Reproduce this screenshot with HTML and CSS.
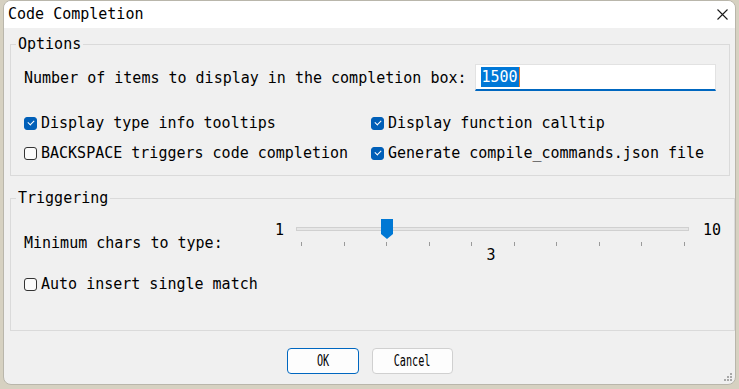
FILE: index.html
```html
<!DOCTYPE html>
<html lang="en">
  <head>
    <meta charset="UTF-8" />
    <title>Code Completion</title>
    <link rel="stylesheet" href="styles.css">
  </head>
  <body>
    <div class="window">
      <div class="titlebar">
        <span class="title">Code Completion</span>
        <svg class="close" width="11" height="11" viewBox="0 0 11 11">
          <path d="M0.5 0.5 L10.5 10.5 M10.5 0.5 L0.5 10.5" stroke="#1a1a1a" stroke-width="1.1" />
        </svg>
      </div>
      <div class="content">
        <fieldset class="group options">
          <legend>Options</legend>
          <div class="items-row">
            <span class="items-label">Number of items to display in the completion box:</span>
            <div class="textbox"><span class="sel">1500</span><span class="caret"></span></div>
          </div>
          <div class="check-grid">
            <div class="check"><span class="box checked"></span>Display type info tooltips</div>
            <div class="check"><span class="box checked"></span>Display function calltip</div>
            <div class="check"><span class="box"></span>BACKSPACE triggers code completion</div>
            <div class="check"><span class="box checked"></span>Generate compile_commands.json file</div>
          </div>
        </fieldset>

        <fieldset class="group triggering">
          <legend>Triggering</legend>
          <div class="slider-row">
            <span class="slider-label">Minimum chars to type:</span>
            <div class="slider">
              <div class="slider-top">
                <span class="end">1</span>
                <div class="track-wrap">
                  <div class="track"></div>
                  <svg class="handle" width="12" height="20" viewBox="0 0 12 20">
                    <path d="M0 0 H12 V15 L6 20 L0 15 Z" fill="#0078d4" />
                  </svg>
                  <div class="ticks">
                    <i></i><i></i><i></i><i></i><i></i><i></i><i></i><i></i><i></i><i></i>
                  </div>
                  <div class="value">3</div>
                </div>
                <span class="end">10</span>
              </div>
            </div>
          </div>
          <div class="check single"><span class="box"></span>Auto insert single match</div>
        </fieldset>

        <div class="buttons">
          <button class="btn default"><span>OK</span></button>
          <button class="btn"><span>Cancel</span></button>
        </div>
      </div>
      <div class="grip">
        <i style="grid-area: 1 / 3"></i>
        <i style="grid-area: 2 / 2"></i><i style="grid-area: 2 / 3"></i>
        <i style="grid-area: 3 / 1"></i><i style="grid-area: 3 / 2"></i><i style="grid-area: 3 / 3"></i>
      </div>
    </div>
  </body>
</html>
```

FILE: styles.css
```css
* {
  margin: 0;
  padding: 0;
  box-sizing: border-box;
}
body {
  background-color: #d6d1c1;
  font-family: "DejaVu Sans Mono", "Liberation Mono", monospace;
  font-size: 15px;
  color: #000;
}
.window {
  position: relative;
  width: 733px;
  height: 385px;
  margin-left: 3px;
  background-color: #f0f0f0;
  border: 1px solid #b9b6ab;
  border-radius: 8px;
  overflow: hidden;
}
.titlebar {
  display: flex;
  align-items: center;
  justify-content: space-between;
  height: 27px;
  padding: 0 7px 0 4px;
  background-color: #fff;
}
.title {
  line-height: 27px;
}
.content {
  padding: 7px 5px 0 6px;
}
.group {
  border: 1px solid #dadada;
  padding: 0 13px 0 13px;
}
.group legend {
  margin-left: -8px;
  padding: 0 2px;
  line-height: 18px;
}
.options {
  height: 141px;
}
.items-row {
  display: flex;
  align-items: center;
  gap: 8px;
  margin-top: 11px;
}
.textbox {
  flex: 1;
  height: 27px;
  display: flex;
  align-items: center;
  padding-left: 5px;
  background-color: #fff;
  border: 1px solid #e2e2e2;
  border-bottom: 2px solid #0067c0;
}
.sel {
  background-color: #0078d7;
  color: #fff;
  line-height: 20px;
  padding: 0 1px;
}
.caret {
  width: 1px;
  height: 20px;
  background-color: #e87a2c;
}
.check-grid {
  display: grid;
  grid-template-columns: 347px 1fr;
  row-gap: 12px;
  margin-top: 23px;
}
.check {
  display: flex;
  align-items: center;
  gap: 4px;
  line-height: 18px;
}
.box {
  width: 13px;
  height: 13px;
  border: 1px solid #333;
  border-radius: 3px;
  background-color: #fbfbfb;
  position: relative;
}
.box.checked {
  background-color: #005fb8;
  border-color: #005fb8;
}
.box.checked::after {
  content: "";
  position: absolute;
  left: 3px;
  top: 2px;
  width: 5px;
  height: 3px;
  border-left: 1px solid #fff;
  border-bottom: 1px solid #fff;
  transform: rotate(-45deg);
}
.triggering {
  margin-top: 13px;
  height: 142px;
}
.slider-row {
  display: flex;
  align-items: center;
  margin-top: 12px;
}
.slider-label {
  width: 251px;
  padding-top: 2px;
}
.slider-top {
  display: flex;
  align-items: flex-start;
}
.end {
  line-height: 18px;
  margin-top: 2px;
}
.track-wrap {
  position: relative;
  width: 393px;
  height: 46px;
  margin: 0 14px 0 12px;
}
.track {
  margin-top: 8px;
  height: 4px;
  background-color: #e6e6e6;
  border: 1px solid #d0d0d0;
}
.handle {
  position: absolute;
  left: 85px;
  top: 0;
}
.ticks {
  display: flex;
  justify-content: space-between;
  margin: 11px 4px 0 5px;
}
.ticks i {
  width: 1px;
  height: 4px;
  background-color: #9a9a9a;
}
.value {
  text-align: center;
  line-height: 18px;
  padding-right: 3px;
}
.single {
  margin-top: 10px;
}
.buttons {
  display: flex;
  justify-content: center;
  gap: 13px;
  margin-top: 17px;
}
.btn {
  height: 26px;
  background-color: #fdfdfd;
  border: 1px solid #d0d0d0;
  border-radius: 4px;
  font-family: "DejaVu Sans Mono", monospace;
  font-size: 15px;
  color: #000;
}
.btn span {
  display: inline-block;
  transform: scaleX(0.68);
}
.btn.default {
  width: 72px;
  border-color: #0067c0;
}
.btn:not(.default) {
  width: 81px;
}
.grip {
  position: absolute;
  right: 3px;
  bottom: 3px;
  display: grid;
  grid-template-columns: repeat(3, 2px);
  grid-template-rows: repeat(3, 2px);
  gap: 1px;
}
.grip i {
  background-color: #a8a8a8;
}
```
